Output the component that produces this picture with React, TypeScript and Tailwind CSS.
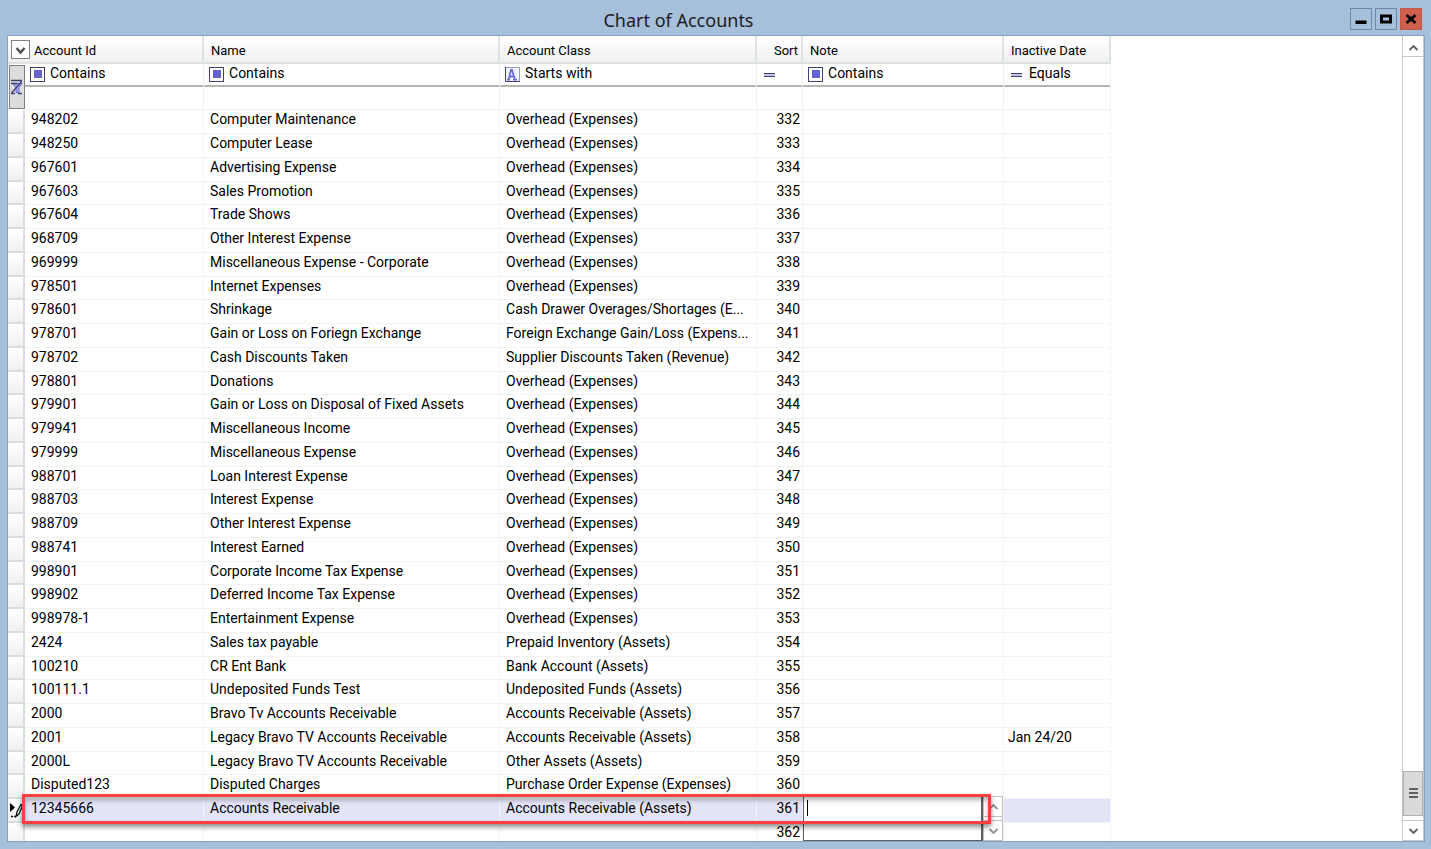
import { useState } from "react";
import type { ReactNode } from "react";

type Account = {
    id: string;
    name: string;
    accountClass: string;
    inactive?: string;
};

const OVERHEAD = "Overhead (Expenses)";
const FIRST_SORT = 332;
const SELECTED_ID = "12345666";

const ACCOUNTS: Account[] = [
    { id: "948202", name: "Computer Maintenance", accountClass: OVERHEAD },
    { id: "948250", name: "Computer Lease", accountClass: OVERHEAD },
    { id: "967601", name: "Advertising Expense", accountClass: OVERHEAD },
    { id: "967603", name: "Sales Promotion", accountClass: OVERHEAD },
    { id: "967604", name: "Trade Shows", accountClass: OVERHEAD },
    { id: "968709", name: "Other Interest Expense", accountClass: OVERHEAD },
    { id: "969999", name: "Miscellaneous Expense - Corporate", accountClass: OVERHEAD },
    { id: "978501", name: "Internet Expenses", accountClass: OVERHEAD },
    { id: "978601", name: "Shrinkage", accountClass: "Cash Drawer Overages/Shortages (E..." },
    { id: "978701", name: "Gain or Loss on Foriegn Exchange", accountClass: "Foreign Exchange Gain/Loss (Expens..." },
    { id: "978702", name: "Cash Discounts Taken", accountClass: "Supplier Discounts Taken (Revenue)" },
    { id: "978801", name: "Donations", accountClass: OVERHEAD },
    { id: "979901", name: "Gain or Loss on Disposal of Fixed Assets", accountClass: OVERHEAD },
    { id: "979941", name: "Miscellaneous Income", accountClass: OVERHEAD },
    { id: "979999", name: "Miscellaneous Expense", accountClass: OVERHEAD },
    { id: "988701", name: "Loan Interest Expense", accountClass: OVERHEAD },
    { id: "988703", name: "Interest Expense", accountClass: OVERHEAD },
    { id: "988709", name: "Other Interest Expense", accountClass: OVERHEAD },
    { id: "988741", name: "Interest Earned", accountClass: OVERHEAD },
    { id: "998901", name: "Corporate Income Tax Expense", accountClass: OVERHEAD },
    { id: "998902", name: "Deferred Income Tax Expense", accountClass: OVERHEAD },
    { id: "998978-1", name: "Entertainment Expense", accountClass: OVERHEAD },
    { id: "2424", name: "Sales tax payable", accountClass: "Prepaid Inventory (Assets)" },
    { id: "100210", name: "CR Ent Bank", accountClass: "Bank Account (Assets)" },
    { id: "100111.1", name: "Undeposited Funds Test", accountClass: "Undeposited Funds (Assets)" },
    { id: "2000", name: "Bravo Tv Accounts Receivable", accountClass: "Accounts Receivable (Assets)" },
    { id: "2001", name: "Legacy Bravo TV Accounts Receivable", accountClass: "Accounts Receivable (Assets)", inactive: "Jan 24/20" },
    { id: "2000L", name: "Legacy Bravo TV Accounts Receivable", accountClass: "Other Assets (Assets)" },
    { id: "Disputed123", name: "Disputed Charges", accountClass: "Purchase Order Expense (Expenses)" },
    { id: SELECTED_ID, name: "Accounts Receivable", accountClass: "Accounts Receivable (Assets)" },
    { id: "", name: "", accountClass: "" },
];

/* ── Icons ───────────────────────────────────────────────────── */

function ContainsIcon() {
    return (
        <svg width="15" height="15" viewBox="0 0 15 15" shapeRendering="crispEdges">
            <rect x="0.5" y="0.5" width="14" height="14" fill="#fff" stroke="#3f3f72" />
            <rect x="4" y="3" width="8" height="8" fill="#6464cc" />
        </svg>
    );
}

function StartsWithIcon() {
    return (
        <svg width="15" height="15" viewBox="0 0 15 15">
            <path d="M0.5 0.5h14v14h-14z" fill="#f4f4ff" stroke="#9a9ac4" />
            <path d="M0.5 0v14.5H15" fill="none" stroke="#3f3f72" />
            <path d="M3.500 12.500 6 3h1l3 9.500M4.500 9.500h4.500" fill="none" stroke="#6a6ad8" strokeWidth="1.8" />
            <path d="M2 12.800h3M8 12.800h4" fill="none" stroke="#6a6ad8" strokeWidth="1.4" />
        </svg>
    );
}

function EqualsIcon() {
    return (
        <svg width="15" height="15" viewBox="0 0 15 15" shapeRendering="crispEdges">
            <path d="M2 6.500h11M2 9.500h11" stroke="#3f3f72" />
            <path d="M2 7.500h11M2 8.500h11" stroke="#c4c4e0" />
        </svg>
    );
}

function ClearFilterIcon() {
    return (
        <svg width="14" height="16" viewBox="0 0 14 16">
            <path d="M3 4.500h9l-3 4v5H6v-5z" fill="#a9a9ee" stroke="#6464cc" />
            <path d="M1 1.500h11M1 4.500h6M1 14.500h4M8 14.500h4M1.500 14 12 2" fill="none" stroke="#3f3f72" strokeWidth="1.3" />
        </svg>
    );
}

function Chevron({ up = false, color = "#606060" }: { up?: boolean; color?: string }) {
    return (
        <svg width="11" height="8" viewBox="0 0 11 8" fill="none" stroke={color} strokeWidth="1.8">
            <path d={up ? "M1.500 6 5.500 2 9.500 6" : "M1.500 2 5.500 6 9.500 2"} />
        </svg>
    );
}

function EditMarker() {
    return (
        <svg width="15" height="18" viewBox="0 0 15 18">
            <path d="M2 2v9l5-4.500z" fill="#000" />
            <path d="M3 15.500h2M6 15.500h1.500" stroke="#000" strokeWidth="1.5" />
            <path d="M8 15.500 9 11l4-7.500 1.500 1.500-3.500 8z" fill="#fff" stroke="#000" strokeWidth="1.2" />
            <path d="M8 15.500l.7-2.500 1.500 1z" fill="#000" />
        </svg>
    );
}

/* ── Header and filter cells ─────────────────────────────────── */

function HeaderCell({ children, className = "pl-[7px] text-left", span }: { children: ReactNode; className?: string; span?: number }) {
    return (
        <th
            colSpan={span}
            scope="col"
            className={`h-7 border-r-2 border-b-2 border-[#dde2e2] bg-linear-to-b from-white to-[#f0f0f0] p-0 pt-1 text-[13px] leading-5 font-normal ${className}`}
        >
            {children}
        </th>
    );
}

function FilterCell({ column, operator, icon }: { column: string; operator?: string; icon: ReactNode }) {
    return (
        <td className="border-r border-b border-[#f1f1f1] p-0">
            <button
                type="button"
                aria-label={`${column} filter operator`}
                className="flex h-[23px] w-full items-center gap-[5px] border-b-2 border-[#b4b4b4] pl-[5px] text-left leading-5"
            >
                {icon}
                {operator && <span className="pb-1">{operator}</span>}
            </button>
            <input aria-label={`${column} filter`} className="block h-[22px] w-full bg-transparent px-1.5 outline-none" />
        </td>
    );
}

const CELL = "border-r border-b border-[#f3f3f3] p-0 pb-1 pl-1.5 whitespace-nowrap";

function AccountRow({ account, sort }: { account: Account; sort: number }) {
    const [note, setNote] = useState("");
    const selected = account.id === SELECTED_ID;

    return (
        <tr className={`relative h-6 leading-[19px] nth-[4n]:h-[23px] nth-[4n]:leading-[18px] ${selected ? "bg-[#e4e4f8]" : ""}`}>
            <td className="border-r-2 border-b-2 border-[#dcdcdc] bg-linear-to-b from-white to-[#f0f0f0] p-0">
                {selected && (
                    <>
                        <EditMarker />
                        <span className="pointer-events-none absolute -top-[5px] left-3.5 z-20 h-[30px] w-[969px] border-3 border-[#f84040] shadow-[0_3px_5px_rgba(0,0,0,0.45),inset_0_3px_5px_rgba(0,0,0,0.3)]" />
                    </>
                )}
            </td>
            <td className={CELL}>{account.id}</td>
            <td className={CELL}>{account.name}</td>
            <td className={CELL}>{account.accountClass}</td>
            <td className="border-r border-b border-[#f3f3f3] p-0 pr-0.5 pb-1 text-right">{sort}</td>
            <td className={`${CELL} relative`}>
                {selected && (
                    <div className="absolute -top-[3px] left-0 z-10 flex h-[45px] w-[200px] bg-white">
                        <textarea
                            aria-label="Note"
                            value={note}
                            onChange={e => setNote(e.target.value)}
                            className="h-full min-w-0 flex-1 resize-none border border-r-2 border-[#606060] bg-white px-1 outline-none"
                        />
                        {!note && <span className="pointer-events-none absolute top-1 left-1 h-4 w-px bg-black" />}
                        <div className="flex w-5 flex-col justify-between border border-[#c0c0c0]">
                            <button type="button" aria-label="Scroll note up" className="flex h-5 items-center justify-center border-b border-[#c0c0c0]">
                                <Chevron up color="#909090" />
                            </button>
                            <button type="button" aria-label="Scroll note down" className="flex h-5 items-center justify-center border-t border-[#c0c0c0]">
                                <Chevron color="#909090" />
                            </button>
                        </div>
                    </div>
                )}
            </td>
            <td className="border-r border-b border-[#f3f3f3] p-0 pb-1 pl-1">{account.inactive}</td>
        </tr>
    );
}

/* ── Window ──────────────────────────────────────────────────── */

export default function App() {
    return (
        <div className="flex h-screen flex-col overflow-hidden bg-[#a6bfdb] pr-1.5 pb-[7px] pl-[7px] font-[Roboto,sans-serif] text-sm text-black">
            <header className="flex h-[35px] shrink-0 items-center">
                <h1 className="flex-1 pt-1 text-center font-['Noto_Sans',sans-serif] text-lg leading-6 text-[#1c1c1c]">Chart of Accounts</h1>
                <div className="flex gap-[3px] pt-0.5 pr-[3px]">
                    <button type="button" aria-label="Minimize" className="flex h-[22px] w-[22px] items-center justify-center border border-[#6f86aa]">
                        <svg width="12" height="12" viewBox="0 0 12 12"><path d="M0.500 7.500h11v3.500h-11z" /></svg>
                    </button>
                    <button type="button" aria-label="Maximize" className="flex h-[22px] w-[22px] items-center justify-center border border-[#6f86aa]">
                        <svg width="12" height="12" viewBox="0 0 12 12"><path d="M1.500 3h9v6h-9z" fill="none" stroke="#000" strokeWidth="3" /></svg>
                    </button>
                    <button type="button" aria-label="Close" className="flex h-[22px] w-[22px] items-center justify-center border border-[#b95a4c] bg-[#d0604d]">
                        <svg width="12" height="12" viewBox="0 0 12 12"><path d="M1.500 2l9 8M10.500 2l-9 8" stroke="#000" strokeWidth="3" /></svg>
                    </button>
                </div>
            </header>

            <main className="flex min-h-0 flex-1 border border-[#86a0c8] bg-white">
                <div className="min-w-0 flex-1 overflow-hidden">
                    <table className="w-[1103px] table-fixed border-separate border-spacing-0">
                        <colgroup>
                            <col className="w-[17px]" />
                            <col className="w-[179px]" />
                            <col className="w-[296px]" />
                            <col className="w-[257px]" />
                            <col className="w-[46px]" />
                            <col className="w-[201px]" />
                            <col className="w-[107px]" />
                        </colgroup>
                        <thead>
                            <tr>
                                <HeaderCell span={2} className="pl-[3px] text-left">
                                    <span className="flex h-5 items-center gap-1">
                                        <button
                                            type="button"
                                            aria-label="Choose columns"
                                            className="mb-1 flex h-[19px] w-[19px] items-center justify-center border border-[#808080] bg-white pt-1"
                                        >
                                            <svg width="11" height="8" viewBox="0 0 11 8" fill="none" stroke="#505050" strokeWidth="2.500">
                                                <path d="M1.500 1 5.500 5.500 9.500 1" />
                                            </svg>
                                        </button>
                                        Account Id
                                    </span>
                                </HeaderCell>
                                <HeaderCell>Name</HeaderCell>
                                <HeaderCell>Account Class</HeaderCell>
                                <HeaderCell className="pr-[3px] text-right">Sort</HeaderCell>
                                <HeaderCell>Note</HeaderCell>
                                <HeaderCell>Inactive Date</HeaderCell>
                            </tr>
                            <tr>
                                <td className="p-0 align-top">
                                    <button
                                        type="button"
                                        aria-label="Clear all filters"
                                        className="mt-px ml-px flex h-11 w-4 items-center justify-center border border-[#808080] bg-[#dcdcdc]"
                                    >
                                        <ClearFilterIcon />
                                    </button>
                                </td>
                                <FilterCell column="Account Id" operator="Contains" icon={<ContainsIcon />} />
                                <FilterCell column="Name" operator="Contains" icon={<ContainsIcon />} />
                                <FilterCell column="Account Class" operator="Starts with" icon={<StartsWithIcon />} />
                                <FilterCell column="Sort" icon={<EqualsIcon />} />
                                <FilterCell column="Note" operator="Contains" icon={<ContainsIcon />} />
                                <FilterCell column="Inactive Date" operator="Equals" icon={<EqualsIcon />} />
                            </tr>
                        </thead>
                        <tbody>
                            {ACCOUNTS.map((account, i) => (
                                <AccountRow key={i} account={account} sort={FIRST_SORT + i} />
                            ))}
                        </tbody>
                    </table>
                </div>

                {/* Vertical scroll bar */}
                <div className="flex w-[22px] shrink-0 flex-col border-r border-l border-[#c8c8c8]">
                    <button type="button" aria-label="Scroll up" className="flex h-[21px] items-center justify-center border-b border-[#c8c8c8] pt-1">
                        <Chevron up />
                    </button>
                    <div className="flex-1" />
                    <div className="mb-1 flex h-[45px] flex-col items-center justify-center gap-px border border-[#b0b0b0] bg-[#dadada]">
                        <span className="h-[3px] w-[9px] border-t-2 border-[#606060]" />
                        <span className="h-[3px] w-[9px] border-t-2 border-[#606060]" />
                        <span className="h-[3px] w-[9px] border-t-2 border-[#606060]" />
                    </div>
                    <button type="button" aria-label="Scroll down" className="flex h-[21px] items-center justify-center border-t border-b border-[#c8c8c8]">
                        <Chevron />
                    </button>
                </div>
            </main>
        </div>
    );
}
